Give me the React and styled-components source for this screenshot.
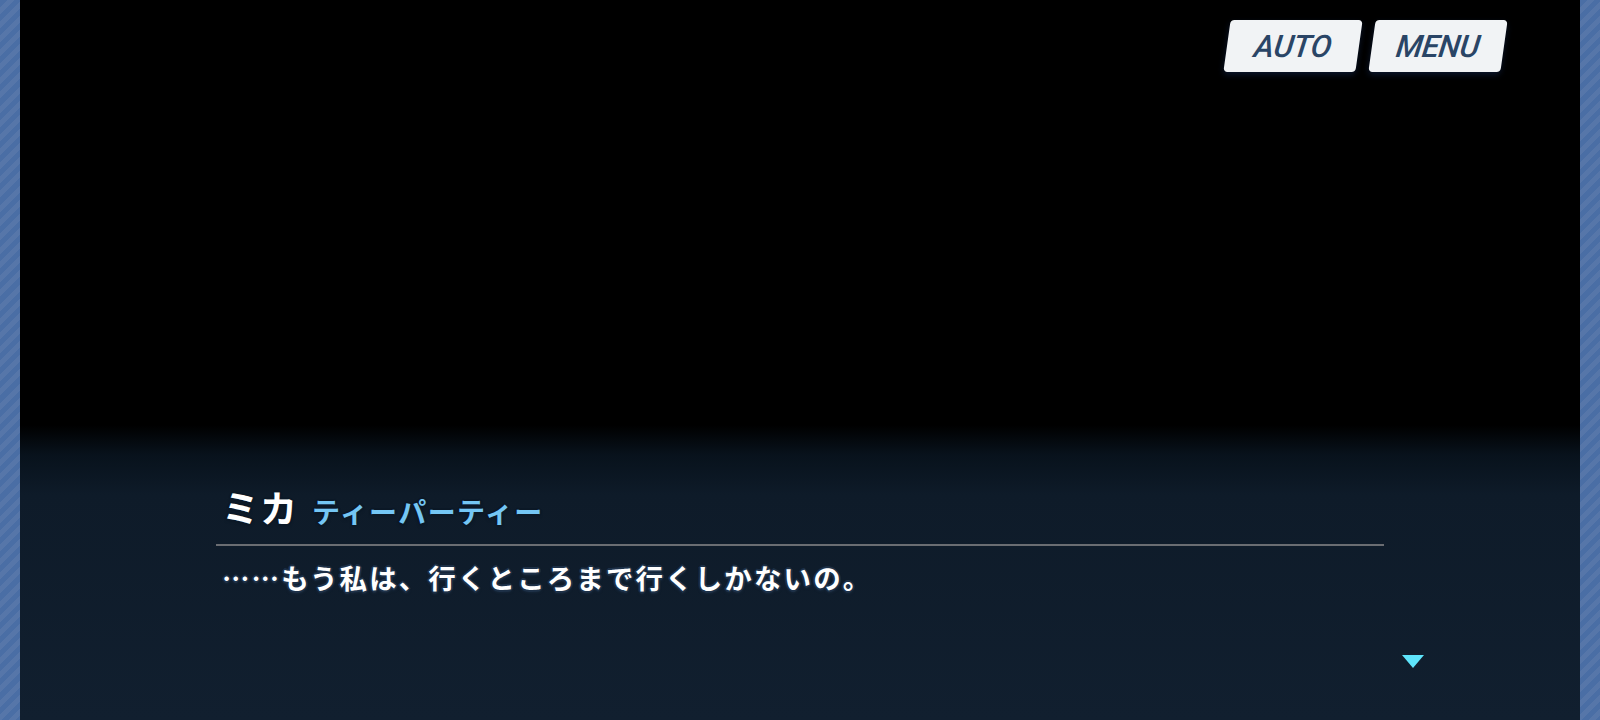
import React from 'react';
import styled, { createGlobalStyle } from 'styled-components';

const GlobalStyle = createGlobalStyle`
  html, body {
    margin: 0;
    padding: 0;
    background: #000;
  }
  body {
    font-family: "Noto Sans CJK JP", "Noto Sans", sans-serif;
  }
`;

const Screen = styled.div`
  width: 1600px;
  height: 720px;
  display: flex;
  overflow: hidden;
`;

const SideStripe = styled.div`
  width: 20px;
  flex: none;
  background: repeating-linear-gradient(
    135deg,
    #4a6ea5 0px,
    #4a6ea5 5px,
    #5676a9 5px,
    #5676a9 10px
  );
`;

const Stage = styled.main`
  flex: 1;
  display: flex;
  flex-direction: column;
  justify-content: space-between;
  background: linear-gradient(
    to bottom,
    #000 0px,
    #000 425px,
    #08121c 455px,
    #0e1b29 495px,
    #111f2f 720px
  );
`;

const TopBar = styled.div`
  display: flex;
  justify-content: flex-end;
  gap: 13px;
  padding: 20px 76px 0 0;
`;

const SkewButton = styled.button`
  width: 132px;
  height: 52px;
  border: none;
  border-radius: 4px;
  background: #f1f3f5;
  transform: skewX(-8deg);
  box-shadow: 0 3px 6px rgba(20, 40, 80, 0.55);
  display: flex;
  align-items: center;
  justify-content: center;
  padding: 0;
  cursor: pointer;
  font-family: Roboto, "Liberation Sans", sans-serif;
  font-style: italic;
  font-weight: 500;
  font-size: 31px;
  letter-spacing: -0.3px;
  color: #2a4566;
`;

const Dialogue = styled.section`
  width: 1208px;
  margin-left: 196px;
  padding-bottom: 52px;
  display: flex;
  flex-direction: column;
`;

const NameRow = styled.div`
  display: flex;
  align-items: baseline;
  gap: 14px;
  padding-left: 6px;
  padding-bottom: 15px;
  width: 1162px;
  border-bottom: 2px solid #6a6d72;
`;

const outline = (c) => `
  -1px -1px 0 ${c}, 1px -1px 0 ${c}, -1px 1px 0 ${c}, 1px 1px 0 ${c},
  0 -2px 0 ${c}, 0 2px 0 ${c}, -2px 0 0 ${c}, 2px 0 0 ${c},
  0 2px 3px ${c}
`;

const Speaker = styled.span`
  font-size: 37px;
  font-weight: 700;
  color: #ffffff;
  line-height: 1.2;
  letter-spacing: 1px;
  text-shadow: ${outline('#0b1826')};
`;

const Affiliation = styled.span`
  font-size: 28px;
  font-weight: 700;
  letter-spacing: 1.4px;
  color: #74c6f4;
  line-height: 1.2;
  text-shadow: ${outline('#0b1826')};
`;

const Line = styled.p`
  margin: 14px 0 0 6px;
  font-size: 27.5px;
  font-weight: 700;
  letter-spacing: 2.1px;
  color: #ffffff;
  line-height: 1.3;
  text-shadow: ${outline('#1d3047')};
`;

const Footer = styled.div`
  display: flex;
  justify-content: flex-end;
  margin-top: 59px;
`;

const NextMark = styled.div`
  width: 0;
  height: 0;
  border-left: 11px solid transparent;
  border-right: 11px solid transparent;
  border-top: 13px solid #5ee4fb;
`;

export default function App() {
  return (
    <>
      <GlobalStyle />
      <Screen>
        <SideStripe />
        <Stage>
          <TopBar>
            <SkewButton>AUTO</SkewButton>
            <SkewButton>MENU</SkewButton>
          </TopBar>
          <Dialogue>
            <NameRow>
              <Speaker>ミカ</Speaker>
              <Affiliation>ティーパーティー</Affiliation>
            </NameRow>
            <Line>……もう私は、行くところまで行くしかないの。</Line>
            <Footer>
              <NextMark />
            </Footer>
          </Dialogue>
        </Stage>
        <SideStripe />
      </Screen>
    </>
  );
}
